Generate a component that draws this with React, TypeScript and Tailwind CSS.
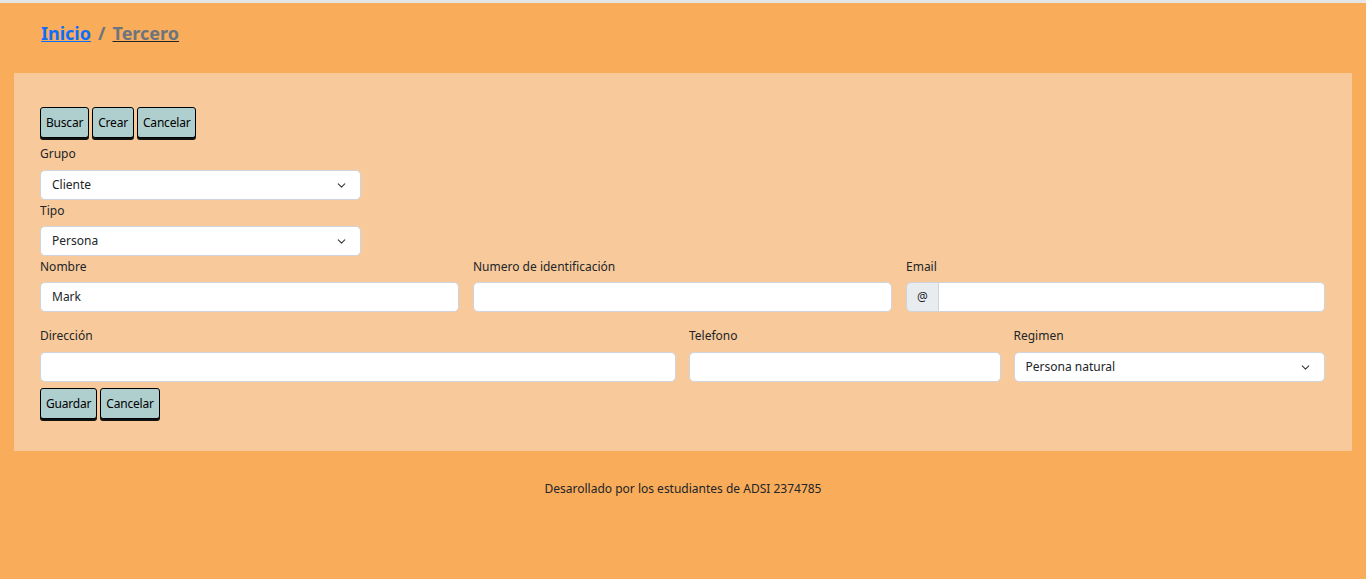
import { ChevronDown } from "lucide-react";

const font = { fontFamily: '"Noto Sans", "Open Sans", sans-serif' };

function Btn({ children }: { children: string }) {
  return (
    <button className="h-[31px] px-[5px] rounded-[3px] border border-black bg-[#afcfcf] text-[12px] tracking-[-0.2px] text-black shadow-[0_2px_0_#111]">
      {children}
    </button>
  );
}

function Label({ children }: { children: string }) {
  return <label className="block text-[12px] text-[#212529] leading-[18px]">{children}</label>;
}

function Select({ value }: { value: string }) {
  return (
    <div className="flex items-center justify-between h-[30px] bg-white border border-[#ced4da] rounded-[5px] pl-[11px] pr-[12px] text-[12px] text-[#212529]">
      <span>{value}</span>
      <ChevronDown size={13} strokeWidth={2} className="text-[#343a40]" />
    </div>
  );
}

function Input({ value }: { value?: string }) {
  return (
    <div className="flex items-center h-[30px] bg-white border border-[#ced4da] rounded-[5px] px-[11px] text-[12px] text-[#212529]">
      {value}
    </div>
  );
}

export default function App() {
  return (
    <div style={font} className="min-h-[579px] bg-[#f9ac5a] border-t-[3px] border-[#e6e6e6]">
      <header className="h-[70px] pl-[41px] pt-[17px]">
        <h1 className="text-[18px] font-bold">
          <a className="text-[#0d6efd] underline">Inicio</a>
          <span className="text-[#6c757d] mx-[7px]">/</span>
          <a className="text-[#6c757d] underline decoration-[#212529]">Tercero</a>
        </h1>
      </header>
      <main className="mx-[14px] bg-[#f8ca9b] pl-[26px] pr-[27px] pt-[34px] pb-[32px]">
        <div className="flex gap-[3px]">
          <Btn>Buscar</Btn>
          <Btn>Crear</Btn>
          <Btn>Cancelar</Btn>
        </div>
        <div className="mt-[7px] w-[321px]">
          <Label>Grupo</Label>
          <div className="mt-[7px]">
            <Select value="Cliente" />
          </div>
        </div>
        <div className="mt-[2px] w-[321px]">
          <Label>Tipo</Label>
          <div className="mt-[6px]">
            <Select value="Persona" />
          </div>
        </div>
        <div className="grid grid-cols-3 gap-x-[14px] mt-[2px]">
          <div>
            <Label>Nombre</Label>
            <div className="mt-[6px]">
              <Input value="Mark" />
            </div>
          </div>
          <div>
            <Label>Numero de identificación</Label>
            <div className="mt-[6px]">
              <Input />
            </div>
          </div>
          <div>
            <Label>Email</Label>
            <div className="mt-[6px] flex">
              <span className="flex items-center justify-center w-[33px] h-[30px] bg-[#e9ecef] border border-[#ced4da] rounded-l-[5px] text-[12px] text-[#212529]">
                @
              </span>
              <div className="flex-1 h-[30px] bg-white border border-l-0 border-[#ced4da] rounded-r-[5px]" />
            </div>
          </div>
        </div>
        <div className="grid grid-cols-4 gap-x-[13px] mt-[15px]">
          <div className="col-span-2">
            <Label>Dirección</Label>
            <div className="mt-[7px]">
              <Input />
            </div>
          </div>
          <div>
            <Label>Telefono</Label>
            <div className="mt-[7px]">
              <Input />
            </div>
          </div>
          <div>
            <Label>Regimen</Label>
            <div className="mt-[7px]">
              <Select value="Persona natural" />
            </div>
          </div>
        </div>
        <div className="flex gap-[3px] mt-[6px]">
          <Btn>Guardar</Btn>
          <Btn>Cancelar</Btn>
        </div>
      </main>
      <footer className="text-center text-[12px] text-[#212529] pt-[29px]">
        Desarollado por los estudiantes de ADSI 2374785
      </footer>
    </div>
  );
}
